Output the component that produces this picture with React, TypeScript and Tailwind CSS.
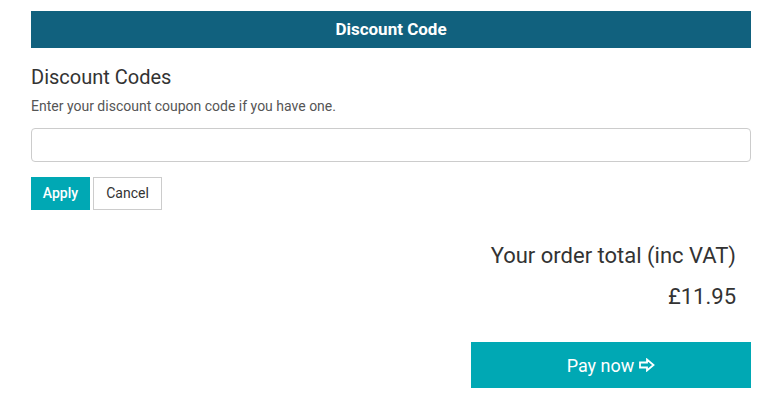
import React from "react";

function HollowArrow() {
  return (
    <svg width="16" height="14" viewBox="0 0 16 14" fill="none" className="ml-[5px] inline-block">
      <path
        d="M1 4.5 H8 V1.5 L14.5 7 L8 12.5 V9.5 H1 Z"
        stroke="white"
        strokeWidth="1.8"
        strokeLinejoin="miter"
      />
    </svg>
  );
}

export default function App() {
  return (
    <div className="min-h-screen bg-white font-['Roboto',sans-serif]">
      <div className="ml-[31px] w-[720px] pt-[11px]">
        {/* header bar */}
        <div className="h-[37px] bg-[#11617e] flex items-center justify-center">
          <span className="text-white text-[17px] font-bold">Discount Code</span>
        </div>

        <h3 className="mt-[16px] text-[20px] leading-[26px] text-[#333]">Discount Codes</h3>
        <p className="mt-[7px] text-[14px] leading-[18px] text-[#555]">
          Enter your discount coupon code if you have one.
        </p>

        <input
          type="text"
          className="mt-[13px] block w-full h-[34px] rounded-[4px] border border-[#ccc] px-3 text-[14px] outline-none"
        />

        <div className="mt-[15px] flex gap-[3px]">
          <button className="h-[33px] w-[59px] bg-[#00a8b4] text-white text-[14px] font-medium">
            Apply
          </button>
          <button className="h-[33px] w-[69px] bg-white border border-[#ccc] text-[#333] text-[14px]">
            Cancel
          </button>
        </div>

        <div className="mt-[32px] pr-[15px] text-right text-[#333]">
          <p className="text-[22px] leading-[28px]">Your order total (inc VAT)</p>
          <p className="mt-[13px] text-[22px] leading-[28px]">£11.95</p>
        </div>

        <div className="mt-[31px] flex justify-end">
          <button className="h-[46px] w-[280px] bg-[#00a8b4] text-white text-[18px] flex items-center justify-center">
            Pay now
            <HollowArrow />
          </button>
        </div>
      </div>
    </div>
  );
}
